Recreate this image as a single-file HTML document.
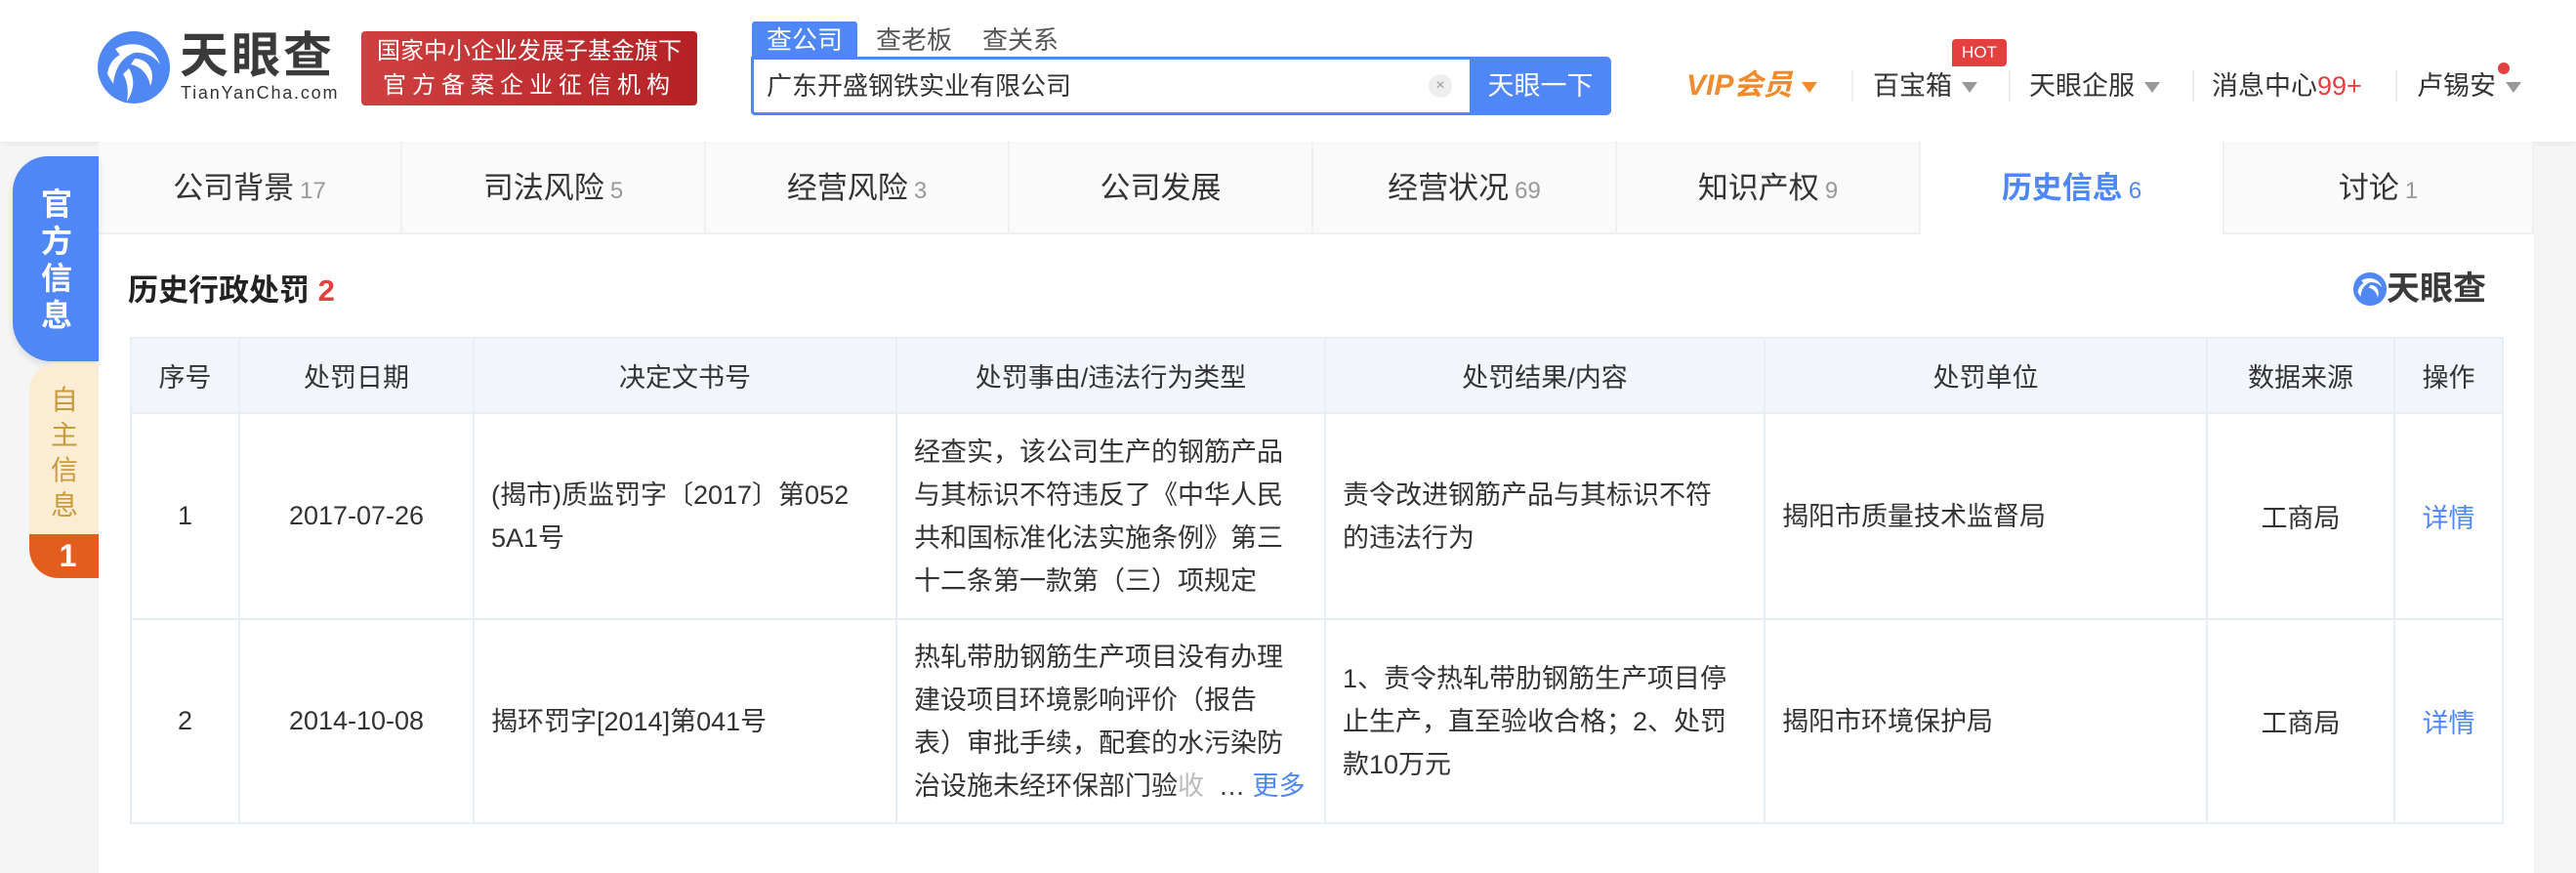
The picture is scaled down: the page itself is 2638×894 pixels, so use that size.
<!DOCTYPE html>
<html><head><meta charset="utf-8"><style>
*{margin:0;padding:0;box-sizing:border-box}
body{width:2638px;height:894px;overflow:hidden;background:#f5f5f5;font-family:"Liberation Sans","Noto Sans CJK SC",sans-serif;color:#333;position:relative}
.abs{position:absolute}
#hdr{left:0;top:0;width:2638px;height:145px;background:#fff;box-shadow:0 2px 6px rgba(0,0,0,.06)}
.nav{top:66px;font-size:27px;color:#333;white-space:nowrap;line-height:44px}
.tri{display:inline-block;width:0;height:0;border-left:8px solid transparent;border-right:8px solid transparent;border-top:11px solid #999;vertical-align:middle;margin-left:10px}
.sep{top:72px;width:2px;height:32px;background:#eee}
#tabs{left:101px;top:145px;width:2494px;height:95px;background:#fafafa;border-bottom:2px solid #f0f0f0}
.tab{position:absolute;top:0;width:311px;height:95px;text-align:center;line-height:95px;font-size:31px;color:#333;border-right:2px solid #f0f0f0}
.tab small{font-size:24px;color:#999;margin-left:6px}
#panel{left:101px;top:240px;width:2494px;height:654px;background:#fff}
table{position:absolute;left:133px;top:345px;border-collapse:collapse;table-layout:fixed;font-size:27px;color:#333}
td,th{border:2px solid #e8eef6;font-weight:normal;text-align:center;vertical-align:middle;white-space:nowrap}
th{background:#f2f6fb;height:77px}
td.l{text-align:left;padding-left:17px;line-height:44px}
.blue{color:#4e87f7}
</style></head><body>
<div id="hdr" class="abs"></div>
<!-- logo -->
<svg class="abs" style="left:98px;top:30px" width="78" height="78" viewBox="0 0 78 78">
<circle cx="39" cy="39" r="37" fill="#4f87f3"/>
<path d="M20 20 C38 10 60 16 66 36 C58 24 40 20 26 28Z" fill="#fff"/>
<path d="M12 46 C14 30 26 22 40 24 C28 28 20 38 18 56Z" fill="#fff"/>
<path d="M40 30 C54 30 62 44 56 58 C54 46 46 38 36 36Z" fill="#fff"/>
<path d="M34 40 C40 50 40 62 32 74 C34 62 32 52 28 46Z" fill="#fff"/>
</svg>
<div class="abs" style="left:184px;top:32px;font-size:50px;line-height:50px;font-weight:bold;color:#3a3a3a;letter-spacing:3px">天眼查</div>
<div class="abs" style="left:185px;top:86px;font-size:18px;line-height:18px;color:#333;letter-spacing:1.8px">TianYanCha.com</div>
<div class="abs" style="left:370px;top:32px;width:344px;height:76px;border-radius:4px;background:linear-gradient(90deg,#cf4040,#b42226);color:#fff;font-size:24px;line-height:35px;text-align:center;padding-top:3px">国家中小企业发展子基金旗下<br><span style="letter-spacing:6px">官方备案企业征信机构</span></div>
<!-- search -->
<div class="abs" style="left:770px;top:22px;width:108px;height:38px;background:#4f87f7;color:#fff;font-size:26px;text-align:center;line-height:38px;border-radius:3px 3px 0 0">查公司</div>
<div class="abs" style="left:897px;top:22px;font-size:26px;color:#555;line-height:38px">查老板</div>
<div class="abs" style="left:1006px;top:22px;font-size:26px;color:#555;line-height:38px">查关系</div>
<div class="abs" style="left:769px;top:58px;width:740px;height:60px;border:3px solid #4f87f7;border-radius:0 0 0 4px;background:#fff"></div>
<div class="abs" style="left:785px;top:68px;font-size:26px;line-height:40px;color:#333">广东开盛钢铁实业有限公司</div>
<div class="abs" style="left:1463px;top:76px;width:24px;height:24px;border-radius:50%;background:#eee;color:#999;font-size:16px;text-align:center;line-height:24px">×</div>
<div class="abs" style="left:1505px;top:58px;width:145px;height:60px;background:#4f87f7;border-radius:0 5px 5px 0;color:#fff;font-size:27px;text-align:center;line-height:60px">天眼一下</div>
<!-- right nav -->
<div class="abs nav" style="left:1727px;color:#f08a2c;font-weight:bold;font-style:italic;font-size:30px">VIP会员<span class="tri" style="border-top-color:#f08a2c"></span></div>
<div class="abs sep" style="left:1896px"></div>
<div class="abs nav" style="left:1918px">百宝箱<span class="tri"></span></div>
<div class="abs" style="left:1999px;top:40px;width:56px;height:28px;background:#e54040;color:#fff;font-size:17px;text-align:center;line-height:28px;border-radius:4px 4px 4px 0">HOT</div>
<div class="abs sep" style="left:2057px"></div>
<div class="abs nav" style="left:2078px">天眼企服<span class="tri"></span></div>
<div class="abs sep" style="left:2245px"></div>
<div class="abs nav" style="left:2265px">消息中心<span style="color:#e54040">99+</span></div>
<div class="abs sep" style="left:2453px"></div>
<div class="abs nav" style="left:2475px">卢锡安<span class="tri"></span></div>
<div class="abs" style="left:2558px;top:64px;width:12px;height:12px;border-radius:50%;background:#e54040"></div>
<!-- tabs -->
<div id="tabs" class="abs">
<div class="tab" style="left:0">公司背景<small>17</small></div>
<div class="tab" style="left:311px">司法风险<small>5</small></div>
<div class="tab" style="left:622px">经营风险<small>3</small></div>
<div class="tab" style="left:933px">公司发展</div>
<div class="tab" style="left:1244px">经营状况<small>69</small></div>
<div class="tab" style="left:1555px">知识产权<small>9</small></div>
<div class="tab" style="left:1866px;background:#fff;color:#4e87f7;font-weight:bold;height:97px">历史信息<small style="color:#4e87f7;font-weight:normal">6</small></div>
<div class="tab" style="left:2177px;width:317px">讨论<small>1</small></div>
</div>
<div id="panel" class="abs"></div>
<!-- sidebar -->
<div class="abs" style="left:13px;top:160px;width:88px;height:210px;background:#4f87f7;border-radius:36px 0 0 40px;box-shadow:0 4px 8px rgba(0,0,0,.1)"></div>
<div class="abs" style="left:38px;top:190px;width:40px;color:#fff;font-size:32px;font-weight:bold;line-height:38px;text-align:center">官<br>方<br>信<br>息</div>
<div class="abs" style="left:30px;top:372px;width:71px;height:176px;background:#fbedd3;border-radius:28px 0 0 0"></div>
<div class="abs" style="left:46px;top:392px;width:40px;color:#c89a3a;font-size:28px;line-height:36px;text-align:center">自<br>主<br>信<br>息</div>
<div class="abs" style="left:30px;top:547px;width:71px;height:45px;background:#e35e1e;border-radius:0 0 0 30px;color:#fff;font-size:32px;font-weight:bold;text-align:center;line-height:44px;padding-left:8px">1</div>
<!-- title -->
<div class="abs" style="left:131px;top:278px;font-size:31px;font-weight:bold;color:#222;line-height:40px">历史行政处罚 <span style="color:#e54040">2</span></div>
<svg class="abs" style="left:2409px;top:278px" width="36" height="36" viewBox="0 0 78 78">
<circle cx="39" cy="39" r="37" fill="#4f87f3"/>
<path d="M20 20 C38 10 60 16 66 36 C58 24 40 20 26 28Z" fill="#fff"/>
<path d="M12 46 C14 30 26 22 40 24 C28 28 20 38 18 56Z" fill="#fff"/>
<path d="M40 30 C54 30 62 44 56 58 C54 46 46 38 36 36Z" fill="#fff"/>
</svg>
<div class="abs" style="left:2444px;top:276px;font-size:34px;font-weight:bold;color:#3a3a3a;line-height:40px">天眼查</div>
<!-- table -->
<table>
<colgroup><col style="width:111px"><col style="width:240px"><col style="width:433px"><col style="width:439px"><col style="width:450px"><col style="width:453px"><col style="width:192px"><col style="width:111px"></colgroup>
<tr><th>序号</th><th>处罚日期</th><th>决定文书号</th><th>处罚事由/违法行为类型</th><th>处罚结果/内容</th><th>处罚单位</th><th>数据来源</th><th>操作</th></tr>
<tr style="height:211px"><td>1</td><td>2017-07-26</td><td class="l">(揭市)质监罚字〔2017〕第052<br>5A1号</td><td class="l">经查实，该公司生产的钢筋产品<br>与其标识不符违反了《中华人民<br>共和国标准化法实施条例》第三<br>十二条第一款第（三）项规定</td><td class="l">责令改进钢筋产品与其标识不符<br>的违法行为</td><td class="l">揭阳市质量技术监督局</td><td>工商局</td><td class="blue">详情</td></tr>
<tr style="height:209px"><td>2</td><td>2014-10-08</td><td class="l">揭环罚字[2014]第041号</td><td class="l">热轧带肋钢筋生产项目没有办理<br>建设项目环境影响评价（报告<br>表）审批手续，配套的水污染防<br>治设施未经环保部门验<span style="color:#bbb">收</span>&nbsp;&nbsp;… <span class="blue">更多</span></td><td class="l">1、责令热轧带肋钢筋生产项目停<br>止生产，直至验收合格；2、处罚<br>款10万元</td><td class="l">揭阳市环境保护局</td><td>工商局</td><td class="blue">详情</td></tr>
</table>
</body></html>
